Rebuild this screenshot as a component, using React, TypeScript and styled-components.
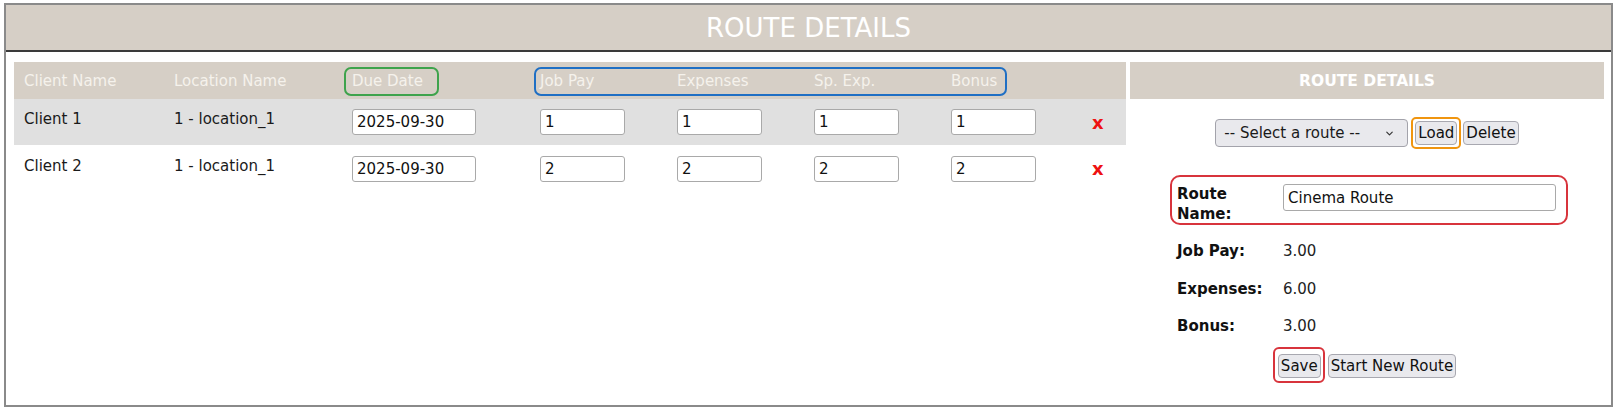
import React from 'react';
import styled, {createGlobalStyle} from 'styled-components';
import {ChevronDown} from 'lucide-react';

const GlobalStyle = createGlobalStyle`
  body {
    margin: 0;
    background: #fff;
    font-family: "DejaVu Sans", Verdana, sans-serif;
    font-size: 15px;
    color: #1a1a1a;
  }
`

const Frame = styled.div`
  margin: 3px 0 0 4px;
  width: 1609px;
  height: 404px;
  box-sizing: border-box;
  border: 2px solid #8a8a8a;
`
const TitleBar = styled.header`
  height: 45px;
  background: #d6cfc6;
  border-bottom: 2px solid #3a3a3a;
  color: #fff;
  font-size: 26px;
  display: flex;
  align-items: center;
  justify-content: center;
`
const Content = styled.div`
  display: flex;
  gap: 4px;
  padding: 10px 7px 0 8px;
`
const Table = styled.div`
  width: 1112px;
`
const Row = styled.div<{ $bg: string; $h: number }>`
  display: grid;
  grid-template-columns: 150px 178px 188px 137px 137px 137px 146px 39px;
  height: ${p => p.$h}px;
  background: ${p => p.$bg};
  align-items: center;
`
const HeadCell = styled.div`
  position: relative;
  align-self: stretch;
  display: flex;
  align-items: center;
  padding-left: 10px;
  color: #f5f2ec;
`
const Cell = styled.div<{ $lift?: number }>`
  padding-left: 10px;
  padding-bottom: ${p => p.$lift || 0}px;
`
const Mark = styled.span<{ $color: string; $w: number; $left: number }>`
  position: absolute;
  left: ${p => p.$left}px;
  top: 5px;
  width: ${p => p.$w}px;
  height: 29px;
  border: 2px solid ${p => p.$color};
  border-radius: 7px;
  box-sizing: border-box;
  pointer-events: none;
`
const Field = styled.input<{ $w: number }>`
  width: ${p => p.$w}px;
  height: 26px;
  box-sizing: border-box;
  border: 1px solid #a9a9a9;
  border-radius: 3px;
  padding: 0 4px;
  font-family: inherit;
  font-size: 15px;
  color: #111;
  background: #fff;
`
const Remove = styled.span`
  color: #ee1111;
  font-weight: bold;
  font-size: 18px;
  margin-left: -5px;
`

const Panel = styled.div`
  width: 474px;
`
const PanelHead = styled.div`
  height: 37px;
  background: #d6cfc6;
  color: #fff;
  font-weight: bold;
  font-size: 15.5px;
  display: flex;
  align-items: center;
  justify-content: center;
`
const Toolbar = styled.div`
  display: flex;
  align-items: center;
  justify-content: center;
  gap: 2px;
  margin-top: 18px;
`
const SelectWrap = styled.div`
  position: relative;
  margin-right: 1px;
  svg {
    position: absolute;
    right: 13px;
    top: 9px;
    pointer-events: none;
  }
`
const Select = styled.select`
  appearance: none;
  width: 193px;
  height: 28px;
  border: 1px solid #a3a3ab;
  border-radius: 4px;
  background: #e9e9ed;
  padding: 0 0 0 8px;
  font-family: inherit;
  font-size: 15px;
  color: #1a1a1a;
`
const Button = styled.button`
  height: 24px;
  padding: 0 2px;
  border: 1px solid #a8a8b0;
  border-radius: 4px;
  background: #e9e9ed;
  font-family: inherit;
  font-size: 15px;
  color: #111;
`
const Ring = styled.span<{ $color: string }>`
  display: inline-flex;
  padding: 2px;
  border: 2px solid ${p => p.$color};
  border-radius: 5px;
`
const Form = styled.div`
  width: 380px;
  margin: 35px auto 0;
`
const FormRow = styled.div<{ $top: number }>`
  position: relative;
  display: grid;
  grid-template-columns: 106px 273px;
  align-items: start;
  margin-top: ${p => p.$top}px;
  line-height: 20px;
`
const Outlined = styled(FormRow)`
  &::after {
    content: '';
    position: absolute;
    left: -7px;
    right: -11px;
    top: -9px;
    bottom: -1px;
    border: 2px solid #d8343c;
    border-radius: 10px;
    pointer-events: none;
  }
`
const Label = styled.span`
  font-weight: bold;
  color: #111;
  padding-right: 20px;
`
const Value = styled.span`
  color: #222;
`
const Actions = styled.div`
  display: flex;
  justify-content: center;
  gap: 7px;
  margin-top: 18px;
`
const Circled = styled.span`
  position: relative;
  display: inline-flex;
  &::after {
    content: '';
    position: absolute;
    left: -5px;
    right: -4px;
    top: -7px;
    bottom: -5px;
    border: 2px solid #d8343c;
    border-radius: 6px;
    pointer-events: none;
  }
`

const rows = [
  {client: 'Client 1', location: '1 - location_1', due: '2025-09-30', v: '1', bg: '#e0e0e0', h: 46},
  {client: 'Client 2', location: '1 - location_1', due: '2025-09-30', v: '2', bg: '#fff', h: 47},
]

export default function App() {
  return (
    <>
      <GlobalStyle/>
      <Frame>
        <TitleBar>ROUTE DETAILS</TitleBar>
        <Content>
          <Table>
            <Row $bg="#d6cfc6" $h={37}>
              <HeadCell>Client Name</HeadCell>
              <HeadCell>Location Name</HeadCell>
              <HeadCell>Due Date<Mark $color="#3ea34c" $w={95} $left={2}/></HeadCell>
              <HeadCell>Job Pay<Mark $color="#1f6fc4" $w={473} $left={4}/></HeadCell>
              <HeadCell>Expenses</HeadCell>
              <HeadCell>Sp. Exp.</HeadCell>
              <HeadCell>Bonus</HeadCell>
              <HeadCell/>
            </Row>
            {rows.map(r => (
              <Row key={r.client} $bg={r.bg} $h={r.h}>
                <Cell $lift={6}>{r.client}</Cell>
                <Cell $lift={6}>{r.location}</Cell>
                <Cell><Field $w={124} defaultValue={r.due}/></Cell>
                <Cell><Field $w={85} defaultValue={r.v}/></Cell>
                <Cell><Field $w={85} defaultValue={r.v}/></Cell>
                <Cell><Field $w={85} defaultValue={r.v}/></Cell>
                <Cell><Field $w={85} defaultValue={r.v}/></Cell>
                <Cell><Remove>x</Remove></Cell>
              </Row>
            ))}
          </Table>
          <Panel>
            <PanelHead>ROUTE DETAILS</PanelHead>
            <Toolbar>
              <SelectWrap>
                <Select defaultValue="">
                  <option value="">-- Select a route --</option>
                </Select>
                <ChevronDown size={11} strokeWidth={2.5} color="#333"/>
              </SelectWrap>
              <Ring $color="#f0950f"><Button>Load</Button></Ring>
              <Button>Delete</Button>
            </Toolbar>
            <Form>
              <Outlined $top={0}>
                <Label>Route Name:</Label>
                <Field $w={273} style={{height: 27}} defaultValue="Cinema Route"/>
              </Outlined>
              <FormRow $top={17}>
                <Label>Job Pay:</Label>
                <Value>3.00</Value>
              </FormRow>
              <FormRow $top={18}>
                <Label>Expenses:</Label>
                <Value>6.00</Value>
              </FormRow>
              <FormRow $top={17}>
                <Label>Bonus:</Label>
                <Value>3.00</Value>
              </FormRow>
              <Actions>
                <Circled><Button>Save</Button></Circled>
                <Button>Start New Route</Button>
              </Actions>
            </Form>
          </Panel>
        </Content>
      </Frame>
    </>
  )
}
